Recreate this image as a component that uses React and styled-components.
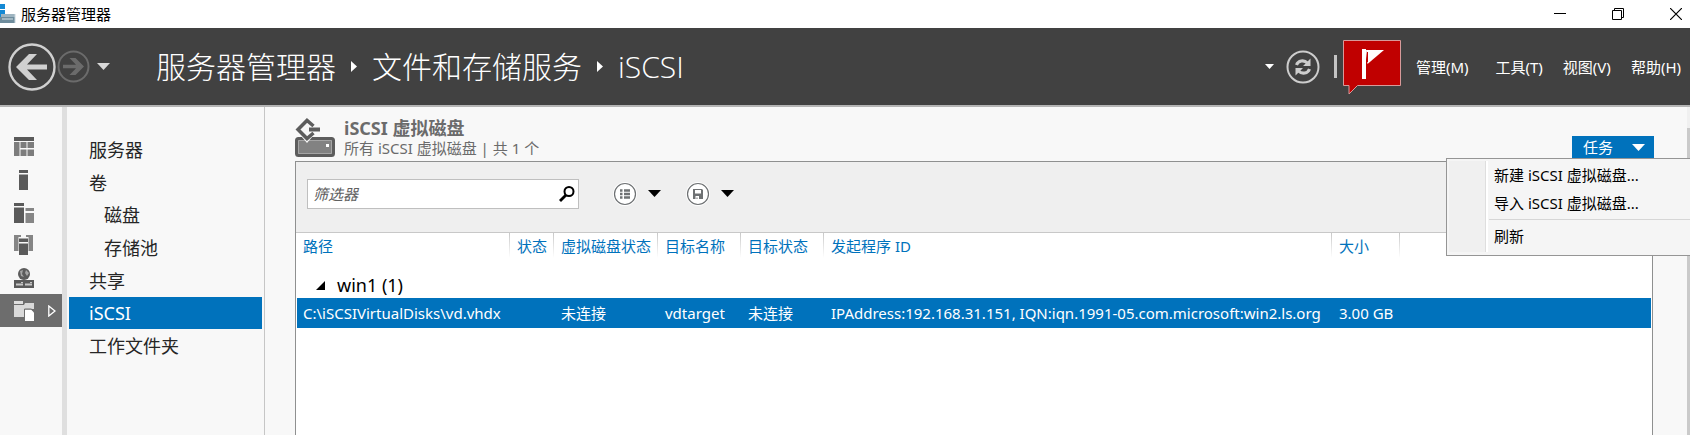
import React from "react";
import styled, { createGlobalStyle, css } from "styled-components";

const sans = '"Noto Sans", "Noto Sans CJK SC", sans-serif';
const light = '"Open Sans", "Noto Sans CJK SC", sans-serif';
const blue = "#0072bc";

const GlobalStyle = createGlobalStyle`
  *, *::before, *::after { box-sizing: border-box; }
  body { margin: 0; background: #f8f8f8; font-family: ${sans}; font-size: 15px; line-height: 20px; color: #000; }
  button, input { font: inherit; color: inherit; }
  button { background: none; border: 0; padding: 0; display: inline-flex; align-items: center; }
  ul { list-style: none; margin: 0; padding: 0; }
  svg { display: block; flex: none; }
`;

const Window = styled.div`
  display: flex;
  flex-direction: column;
  min-height: 100vh;
  overflow: hidden;
`;

const TitleBar = styled.div`
  display: flex;
  align-items: center;
  height: 28px;
  background: #fff;
`;

const WindowTitle = styled.span`
  flex: 1;
  padding-left: 5px;
`;

const WindowButtons = styled.div`
  display: flex;
  gap: 46px;
  padding-right: 8px;
`;

const Header = styled.header`
  display: flex;
  align-items: center;
  height: 79px;
  padding-left: 8px;
  background: #414141;
  border-bottom: 2px solid #b4b4b4;
  color: #fff;
`;

const HistoryButtons = styled.div`
  display: flex;
  align-items: center;
  gap: 1px;
`;

const HistoryMenuButton = styled.button`
  margin-left: 6px;
`;

const Breadcrumb = styled.nav`
  display: flex;
  flex: 1;
  align-items: center;
  gap: 15px;
  padding-left: 46px;
`;

const Crumb = styled.a`
  color: #fff;
  font-family: ${light};
  font-size: 30px;
  font-weight: 300;
  line-height: 40px;
  text-decoration: none;
`;

const HeaderTools = styled.div`
  display: flex;
  align-items: center;
`;

const RefreshButton = styled.button`
  margin-left: 12px;
`;

const Divider = styled.span`
  width: 3px;
  height: 23px;
  margin: 0 6px 0 14px;
  background: #c4c4c4;
`;

const FlagButton = styled.button`
  margin-right: 15px;
`;

const MenuBar = styled.div`
  display: flex;
  gap: 20px;
  padding-right: 9px;
`;

const MenuBarButton = styled.button`
  margin-right: ${(p) => (p.$spaced ? 7 : 0)}px;
  white-space: nowrap;
`;

const Body = styled.div`
  display: flex;
  flex: 1;
`;

const Rail = styled.nav`
  width: 67px;
  padding-top: 24px;
  border-right: 5px solid #dfdfdf;
`;

const RailList = styled.ul`
  display: grid;
  grid-auto-rows: 1fr;
  height: 196px;
`;

const RailButton = styled.button`
  width: 100%;
  height: 100%;
  padding-left: 14px;
  gap: 14px;
  background: ${(p) => (p.$active ? "#6d6d6d" : "transparent")};
`;

const SideNav = styled.nav`
  width: 198px;
  padding: 27px 2px 0;
  border-right: 1px solid #c6c6c6;
`;

const SideList = styled.ul`
  display: grid;
  grid-auto-rows: 1fr;
  height: 228px;
`;

const SideLink = styled.a`
  display: flex;
  align-items: center;
  height: 100%;
  padding-left: ${(p) => (p.$nested ? 35 : 20)}px;
  font-size: 18px;
  color: #262626;
  text-decoration: none;
  ${(p) =>
    p.$active &&
    css`
      background: ${blue};
      color: #fff;
    `}
`;

const Main = styled.main`
  display: flex;
  flex: 1;
  flex-direction: column;
  min-width: 0;
  padding: 11px 34px 0 30px;
`;

const TileHead = styled.div`
  display: flex;
  align-items: flex-start;
  height: 43px;
`;

const TileTitles = styled.div`
  flex: 1;
  padding-left: 9px;
  color: #6b6b6b;
`;

const TileTitle = styled.h1`
  margin: 0;
  font-size: 18px;
  font-weight: 700;
  line-height: 20px;
`;

const TileSubtitle = styled.p`
  margin: 0;
`;

const TaskMenu = styled.div`
  position: relative;
  align-self: flex-start;
  margin: 18px -1px 0 0;
`;

const TaskButton = styled.button`
  width: 82px;
  height: 22px;
  padding: 0 9px 0 11px;
  justify-content: space-between;
  background: ${blue};
  color: #fff;
`;

const Popup = styled.div`
  position: absolute;
  top: 100%;
  right: -42px;
  z-index: 1;
  width: 250px;
  padding: 2px 2px 3px;
  background: #f5f5f5;
  border: 1px solid #959595;
`;

const PopupItems = styled.ul`
  border-left: 36px solid #f0f0f0;
  box-shadow: inset 1px 0 #dedede, inset 3px 0 #fff;
`;

const PopupItem = styled.button`
  width: 100%;
  height: ${(p) => (p.$last ? 32 : 28)}px;
  padding-left: 9px;
  white-space: nowrap;
`;

const PopupSeparator = styled.li`
  height: 1px;
  margin: 2px 0 0 4px;
  background: #d6d6d6;
`;

const Panel = styled.section`
  flex: 1;
  border: 1px solid #8f9090;
  border-bottom: 0;
  background: #fff;
`;

const Toolbar = styled.div`
  display: flex;
  align-items: center;
  height: 71px;
  padding: 0 11px 7px;
  background: #efefef;
  border-bottom: 1px solid #c8c8c8;
`;

const FilterBox = styled.form`
  display: flex;
  align-items: center;
  width: 272px;
  height: 30px;
  margin-right: 34px;
  padding: 0 3px 0 5px;
  background: #fff;
  border: 1px solid #bfbfbf;
`;

const FilterInput = styled.input`
  flex: 1;
  min-width: 0;
  padding: 0;
  border: 0;
  outline: 0;
  background: transparent;
  &::placeholder { color: #606060; opacity: 1; font-style: italic; }
`;

const ToolButton = styled.button`
  gap: 11px;
  margin-right: 25px;
`;

const Table = styled.table`
  width: 100%;
  border: 1px solid #fff;
  border-width: 0 1px;
  border-collapse: separate;
  border-spacing: 0;
  table-layout: fixed;
`;

const HeadCell = styled.th`
  height: 28px;
  padding: 0 0 2px ${(p) => (p.$first ? 6 : 7)}px;
  color: ${blue};
  font-weight: 400;
  text-align: left;
  white-space: nowrap;
  background: linear-gradient(#c8c8c8, #fff) right top / 1px 25px no-repeat;
  &:last-child { background: none; }
`;

const GroupCell = styled.th`
  height: 37px;
  padding: 9px 0 0 19px;
  font-size: 18px;
  font-weight: 400;
  text-align: left;
`;

const GroupToggle = styled.button`
  gap: 12px;
`;

const Row = styled.tr`
  background: ${blue};
  color: #fff;
`;

const Cell = styled.td`
  height: 30px;
  padding: 0 0 0 ${(p) => (p.$first ? 6 : 7)}px;
  white-space: nowrap;
`;

const Col = styled.col`
  width: ${(p) => (p.$width ? `${p.$width}px` : "auto")};
`;

const ScrollTrack = styled.div`
  width: 3px;
  padding-top: 21px;
  background: #f0f0f0;
`;

const ScrollThumb = styled.div`
  height: 100%;
  background: #cacaca;
`;

const AppIcon = () => (
  <svg width="16" height="20" viewBox="0 0 16 20">
    <path d="M0 0H5V5H0zM0 6H5V13H0z" fill="#1489d4" />
    <path d="M1 10H15V13H1z" fill="#9eb4c0" />
    <rect x="0" y="13" width="15" height="6" fill="#6e8c9c" />
    <path d="M2 15H13" stroke="#d5e2e8" />
    <path d="M15 10V19" stroke="#c9d6dd" />
  </svg>
);

const Back = () => (
  <svg width="48" height="48" viewBox="0 0 48 48">
    <circle cx="24" cy="24" r="22.5" fill="none" stroke="#d0d0d0" strokeWidth="2.4" />
    <path d="M8 24 21 11H29L19 21.5H39V26.5H19L29 37H21z" fill="#d0d0d0" />
  </svg>
);

const Forward = () => (
  <svg width="33" height="33" viewBox="0 0 33 33">
    <circle cx="16.5" cy="16.5" r="15" fill="none" stroke="#6b6b6b" strokeWidth="2" />
    <path d="M27 16.5 18.5 8H12.5L19 14.7H6V18.3H19L12.5 25H18.5z" fill="#6b6b6b" />
  </svg>
);

const Caret = ({ width = 13, height = 7, color = "#000" }) => (
  <svg width={width} height={height} viewBox="0 0 12 6" preserveAspectRatio="none">
    <path d="M0 0H12L6 6z" fill={color} />
  </svg>
);

const CrumbArrow = () => (
  <svg width="6" height="11" viewBox="0 0 6 11">
    <path d="M0 0 6 5.5 0 11z" fill="#fff" />
  </svg>
);

const Refresh = () => (
  <svg width="34" height="34" viewBox="0 0 34 34">
    <circle cx="17" cy="17" r="15.5" fill="none" stroke="#cdcdcd" strokeWidth="2" />
    <g fill="none" stroke="#cdcdcd" strokeWidth="3">
      <path d="M10.5 15C12 10.500 18 9.500 21.500 13" />
      <path d="M23.500 19C22 23.500 16 24.500 12.500 21" />
    </g>
    <path d="M24.500 8.500V16H17zM9.500 25.500V18H17z" fill="#cdcdcd" />
  </svg>
);

const Flag = () => (
  <svg width="58" height="56" viewBox="0 0 58 56">
    <path d="M.5 1.500H57.500V46.500H14.500L6 55V46.500H.5z" fill="#c00000" stroke="#d79a9a" />
    <path d="M19 10H23V40H19z" fill="#fff" />
    <path d="M23 11H41L24.500 25z" fill="#fff" />
    <path d="M24.500 13V23" stroke="#c00000" />
  </svg>
);

const Minimize = () => (
  <svg width="12" height="12" viewBox="0 0 12 12"><path d="M0 5.500H12" stroke="#000" /></svg>
);
const Restore = () => (
  <svg width="12" height="12" viewBox="0 0 12 12" fill="none" stroke="#000">
    <path d="M.5 2.500H9.500V11.500H.5z" /><path d="M2.500 2.500V.5H11.500V9.500H9.500" />
  </svg>
);
const Close = () => (
  <svg width="12" height="12" viewBox="0 0 12 12"><path d="M0 0 12 12M12 0 0 12" stroke="#000" strokeWidth="1.200" /></svg>
);

const railIcons = {
  dashboard: (
    <>
      <path d="M0 0H20V4H0z" fill="#5a5a5a" />
      <path d="M0 5H5.500V19H0zM6.500 5H12.500V11H6.500zM13.500 5H20V11H13.500zM6.500 12.500H12.500V19H6.500zM13.500 12.500H20V19H13.500z" fill="#7d7d7d" />
    </>
  ),
  server: (
    <>
      <path d="M5 0H14V3H5z" fill="#5a5a5a" />
      <path d="M5 4.500H14V20H5z" fill="#5a5a5a" />
    </>
  ),
  servers: (
    <>
      <path d="M0 0H10V3H0zM0 4.500H10V20H0z" fill="#5a5a5a" />
      <path d="M11.500 5H20V8H11.500zM11.500 10H20V20H11.500z" fill="#868686" />
    </>
  ),
  group: (
    <>
      <path d="M0 0H7V2H4.500V16H0zM12 0H19V16H14.500V2H12z" fill="#858585" />
      <path d="M5 3.500H14V7H5zM5 8.500H14V20H5z" fill="#5a5a5a" />
    </>
  ),
  web: (
    <>
      <circle cx="10" cy="6" r="6" fill="#5c5c5c" />
      <path d="M6 3 9 2 8 6 10 9 7 8zM12 2 15 5 13 8 11 5z" fill="#a5a5a5" />
      <path d="M0 12H20V20H0z" fill="#5a5a5a" />
      <path d="M2 16.500H9M11 16.500H18" stroke="#c8c8c8" strokeWidth="2" />
      <path d="M7 14.500H9M16 14.500H18" stroke="#c8c8c8" />
    </>
  ),
  files: (
    <>
      <path d="M0 0H9V3H0z" fill="#dedede" />
      <path d="M0 4H10L11 2H20V8H11V16H0z" fill="#d9d9d9" />
      <path d="M11 8.500H17L20 11.500V20H11z" fill="#fff" />
      <path d="M10.500 19V8H17.500L20 10.500" fill="none" stroke="#6d6d6d" />
    </>
  ),
};

const RailIcon = ({ name }) => (
  <svg width="20" height="20" viewBox="0 0 20 20">{railIcons[name]}</svg>
);

const DiskIcon = () => (
  <svg width="40" height="39" viewBox="0 0 40 39">
    <rect x="1.500" y="20.500" width="37" height="17" rx="2" fill="#828282" stroke="#5d5d5d" strokeWidth="3" />
    <path d="M3.500 22.500H36.500V35.500H3.500z" fill="none" stroke="#a5a5a5" />
    <rect x="31" y="26" width="3" height="3" fill="#fff" />
    <path d="M12 -1 0 11 12 25 24 11z" fill="#f8f8f8" />
    <path d="M18.500 8 12 2.500 3 11.500 12 20.500 18.500 15" fill="none" stroke="#5d5d5d" strokeWidth="3.500" />
    <path d="M14 11.500H25" stroke="#5d5d5d" strokeWidth="4" />
  </svg>
);

const Search = () => (
  <svg width="16" height="16" viewBox="0 0 16 16" fill="none" stroke="#000">
    <circle cx="10" cy="5.500" r="4.500" strokeWidth="2" />
    <path d="M7 9 1 15" strokeWidth="2.800" />
  </svg>
);

const ListIcon = () => (
  <svg width="24" height="24" viewBox="0 0 24 24">
    <circle cx="12" cy="12" r="12" fill="#fff" />
    <circle cx="12" cy="12" r="10.500" fill="none" stroke="#6e7173" strokeWidth="1.200" />
    <path d="M7 8.500H9.500M11 8.500H17M7 12H9.500M11 12H17M7 15.500H9.500M11 15.500H17" stroke="#6e7173" strokeWidth="2.500" />
  </svg>
);

const SaveIcon = () => (
  <svg width="24" height="24" viewBox="0 0 24 24">
    <circle cx="12" cy="12" r="12" fill="#fff" />
    <circle cx="12" cy="12" r="10.500" fill="none" stroke="#6e7173" strokeWidth="1.200" />
    <path d="M7 7H16L17 8V17H7z" fill="#6e7173" />
    <path d="M9 8H15V11.500H9zM9.500 14H13V17H11.500V15.500H10.500V17H9.500z" fill="#fff" />
  </svg>
);

const rail = [
  ["dashboard", "仪表板"],
  ["server", "本地服务器"],
  ["servers", "所有服务器"],
  ["group", "角色组"],
  ["web", "IIS"],
  ["files", "文件和存储服务"],
];

const sections = [
  { text: "服务器" },
  { text: "卷" },
  { text: "磁盘", nested: true },
  { text: "存储池", nested: true },
  { text: "共享" },
  { text: "iSCSI", active: true },
  { text: "工作文件夹" },
];

const columns = [
  { text: "路径", width: 213, value: "C:\\iSCSIVirtualDisks\\vd.vhdx" },
  { text: "状态", width: 44, value: "" },
  { text: "虚拟磁盘状态", width: 104, value: "未连接" },
  { text: "目标名称", width: 83, value: "vdtarget" },
  { text: "目标状态", width: 83, value: "未连接" },
  { text: "发起程序 ID", width: 508, value: "IPAddress:192.168.31.151, IQN:iqn.1991-05.com.microsoft:win2.ls.org" },
  { text: "大小", width: 68, value: "3.00 GB" },
  { text: "", value: "" },
];

export default function App() {
  return (
    <Window>
      <GlobalStyle />
      <TitleBar>
        <AppIcon />
        <WindowTitle>服务器管理器</WindowTitle>
        <WindowButtons>
          <button aria-label="最小化"><Minimize /></button>
          <button aria-label="还原"><Restore /></button>
          <button aria-label="关闭"><Close /></button>
        </WindowButtons>
      </TitleBar>
      <Header>
        <HistoryButtons>
          <button aria-label="后退"><Back /></button>
          <button aria-label="前进"><Forward /></button>
          <HistoryMenuButton aria-label="历史记录"><Caret color="#d8d8d8" /></HistoryMenuButton>
        </HistoryButtons>
        <Breadcrumb>
          <Crumb href="#manager">服务器管理器</Crumb>
          <CrumbArrow />
          <Crumb href="#storage">文件和存储服务</Crumb>
          <CrumbArrow />
          <Crumb href="#iscsi">iSCSI</Crumb>
        </Breadcrumb>
        <HeaderTools>
          <button aria-label="更多"><Caret width={9} height={5} color="#fff" /></button>
          <RefreshButton aria-label="刷新"><Refresh /></RefreshButton>
          <Divider />
          <FlagButton aria-label="通知"><Flag /></FlagButton>
          <MenuBar>
            <MenuBarButton $spaced>管理(M)</MenuBarButton>
            <MenuBarButton>工具(T)</MenuBarButton>
            <MenuBarButton>视图(V)</MenuBarButton>
            <MenuBarButton>帮助(H)</MenuBarButton>
          </MenuBar>
        </HeaderTools>
      </Header>
      <Body>
        <Rail>
          <RailList>
            {rail.map(([name, label]) => (
              <li key={name}>
                <RailButton aria-label={label} $active={name === "files"}>
                  <RailIcon name={name} />
                  {name === "files" && (
                    <svg width="8" height="12" viewBox="0 0 8 12">
                      <path d="M.8 1 7 6 .8 11z" fill="none" stroke="#fff" strokeWidth="1.300" />
                    </svg>
                  )}
                </RailButton>
              </li>
            ))}
          </RailList>
        </Rail>
        <SideNav>
          <SideList>
            {sections.map((s) => (
              <li key={s.text}>
                <SideLink href="#section" $nested={s.nested} $active={s.active}>{s.text}</SideLink>
              </li>
            ))}
          </SideList>
        </SideNav>
        <Main>
          <TileHead>
            <DiskIcon />
            <TileTitles>
              <TileTitle>iSCSI 虚拟磁盘</TileTitle>
              <TileSubtitle>所有 iSCSI 虚拟磁盘 | 共 1 个</TileSubtitle>
            </TileTitles>
            <TaskMenu>
              <TaskButton aria-expanded="true">任务<Caret color="#fff" /></TaskButton>
              <Popup>
                <PopupItems>
                  <li><PopupItem>新建 iSCSI 虚拟磁盘...</PopupItem></li>
                  <li><PopupItem>导入 iSCSI 虚拟磁盘...</PopupItem></li>
                  <PopupSeparator role="separator" />
                  <li><PopupItem $last>刷新</PopupItem></li>
                </PopupItems>
              </Popup>
            </TaskMenu>
          </TileHead>
          <Panel>
            <Toolbar>
              <FilterBox>
                <FilterInput aria-label="筛选器" placeholder="筛选器" />
                <button type="button" aria-label="搜索"><Search /></button>
              </FilterBox>
              <ToolButton aria-label="视图选项"><ListIcon /><Caret /></ToolButton>
              <ToolButton aria-label="保存查询"><SaveIcon /><Caret /></ToolButton>
            </Toolbar>
            <Table>
              <colgroup>
                {columns.map((c) => <Col key={c.text} $width={c.width} />)}
              </colgroup>
              <thead>
                <tr>
                  {columns.map((c, i) => <HeadCell key={c.text} scope="col" $first={i === 0}>{c.text}</HeadCell>)}
                </tr>
              </thead>
              <tbody>
                <tr>
                  <GroupCell colSpan={8} scope="rowgroup">
                    <GroupToggle aria-expanded="true">
                      <svg width="9" height="9" viewBox="0 0 9 9"><path d="M9 0V9H0z" fill="#000" /></svg>
                      win1 (1)
                    </GroupToggle>
                  </GroupCell>
                </tr>
                <Row>
                  {columns.map((c, i) => <Cell key={c.text} $first={i === 0}>{c.value}</Cell>)}
                </Row>
              </tbody>
            </Table>
          </Panel>
        </Main>
        <ScrollTrack><ScrollThumb /></ScrollTrack>
      </Body>
    </Window>
  );
}
